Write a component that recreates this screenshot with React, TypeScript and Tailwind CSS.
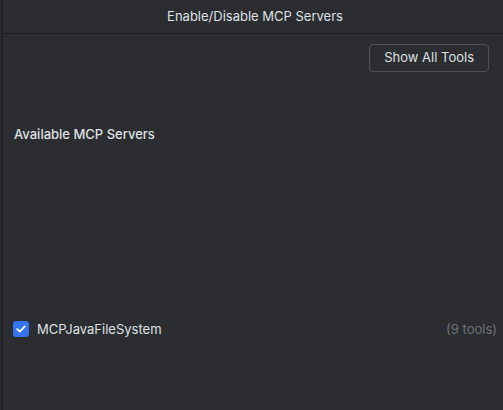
import React from "react";

const CheckIcon = () => (
  <svg width="10" height="8" viewBox="0 0 10 8" fill="none">
    <path
      d="M1.2 4.2L3.8 6.6L8.8 1.4"
      stroke="#ffffff"
      strokeWidth="1.8"
      strokeLinecap="round"
      strokeLinejoin="round"
    />
  </svg>
);

const App: React.FC = () => (
  <div
    className="flex h-[410px] w-[503px] overflow-hidden bg-[#2b2d30] text-[13px] text-[#dfe1e5]"
    style={{ fontFamily: "Inter, 'Noto Sans', sans-serif" }}
  >
    {/* Left sliver of the window behind */}
    <div className="w-[3px] shrink-0 bg-[#26282b] border-r border-[#1e1f22]" />

    <div className="flex min-w-0 flex-1 flex-col">
      {/* Title bar */}
      <div className="flex h-[34px] shrink-0 items-center justify-center border-b border-[#1e1f22] pl-[4px]">
        Enable/Disable MCP Servers
      </div>

      {/* Toolbar */}
      <div className="flex justify-end pr-[14px] pt-[10px]">
        <button className="h-[28px] rounded-[4px] border border-[#4e5157] px-[14px] text-[13px] text-[#dfe1e5]">
          Show All Tools
        </button>
      </div>

      <div className="pl-[11px] pt-[53px] font-medium">Available MCP Servers</div>

      {/* Server list */}
      <div className="flex items-center pl-[10px] pr-[6px] pt-[175px]">
        <div className="flex h-[16px] w-[16px] items-center justify-center rounded-[3px] bg-[#3574f0]">
          <CheckIcon />
        </div>
        <span className="ml-[8px]">MCPJavaFileSystem</span>
        <span className="ml-auto text-[#6f737a]">(9 tools)</span>
      </div>
    </div>
  </div>
);

export default App;
